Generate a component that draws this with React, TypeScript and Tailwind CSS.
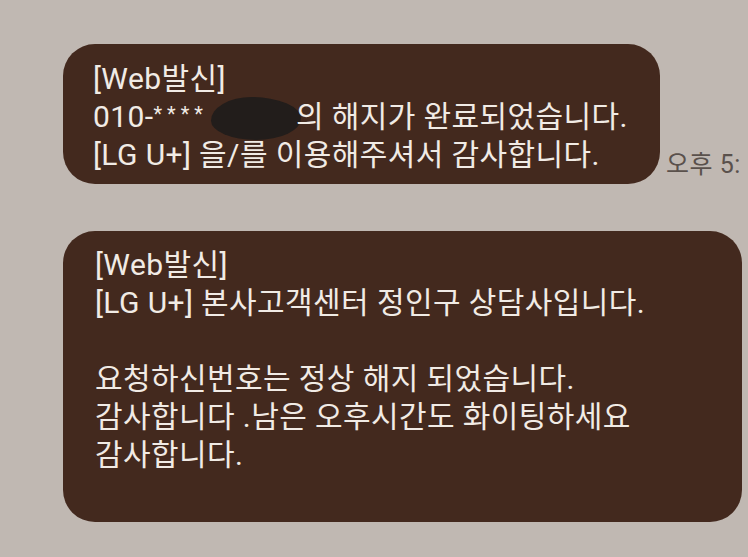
export default function App() {
  const font = { fontFamily: 'Roboto, "Noto Sans CJK KR", "Noto Sans", sans-serif' };
  return (
    <div
      className="w-[748px] h-[557px] overflow-hidden bg-[#c0b8b2] relative"
      style={font}
    >
      <div className="pt-[44px] pl-[63px] flex items-end gap-[6px]">
        <div className="shrink-0 w-[597px] h-[140px] rounded-[32px] bg-[#43291e] pl-[30px] pt-[16px] text-[#f1ebe5] text-[30px] leading-[38px] tracking-[0.4px]">
          <div className="h-[38px]">[Web발신]</div>
          <div className="h-[38px] flex items-center whitespace-nowrap">
            <span>010-</span>
            <span className="text-[20px] tracking-[5px] -mt-[6px]">****</span>
            <span className="inline-block shrink-0 w-[90px] h-[43px] bg-[#221d1b] rounded-[45%_55%_50%_50%/55%_50%_50%_45%] ml-[3px] mt-[2px]" />
            <span className="-ml-[5px]">의 해지가 완료되었습니다.</span>
          </div>
          <div className="h-[38px] whitespace-nowrap">[LG U+] 을/를 이용해주셔서 감사합니다.</div>
        </div>
        <div className="shrink-0 text-[25px] tracking-[0.5px] leading-[34px] mb-[2px] text-[#5a514c] whitespace-nowrap">오후 5:</div>
      </div>
      <div className="pt-[47px] pl-[63px]">
        <div className="w-[679px] h-[291px] rounded-[32px] bg-[#43291e] pl-[32px] pt-[15px] text-[#f1ebe5] text-[30px] leading-[38px] tracking-[0.4px] whitespace-nowrap">
          <div>[Web발신]</div>
          <div>[LG U+] 본사고객센터 정인구 상담사입니다.</div>
          <div className="h-[38px]" />
          <div>요청하신번호는 정상 해지 되었습니다.</div>
          <div>감사합니다 .남은 오후시간도 화이팅하세요</div>
          <div>감사합니다.</div>
        </div>
      </div>
    </div>
  );
}
